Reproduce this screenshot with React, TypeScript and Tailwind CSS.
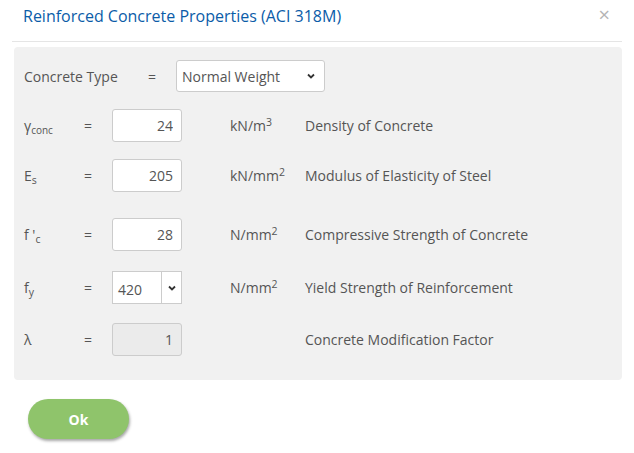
import { ReactNode } from "react";

const font = { fontFamily: '"Open Sans", "Liberation Sans", sans-serif' };

function Row({ label, control, unit, desc, className }: {
  label: ReactNode;
  control: ReactNode;
  unit?: ReactNode;
  desc: string;
  className?: string;
}) {
  return (
    <div className={"flex items-center " + (className ?? "")}>
      <div className="w-[60px] text-[14px] text-[#555]">{label}</div>
      <div className="w-[28px] text-[14px] text-[#555]">=</div>
      {control}
      <div className="w-[75px] ml-[48px] text-[14px] text-[#555]">{unit}</div>
      <div className="text-[14px] text-[#555]">{desc}</div>
    </div>
  );
}

function NumInput({ value, disabled }: { value: string; disabled?: boolean }) {
  return (
    <input
      readOnly
      value={value}
      disabled={disabled}
      className={
        "w-[70px] h-[33px] rounded-[3px] border border-[#ccc] text-right pr-[8px] text-[14px] text-[#555] outline-none " +
        (disabled ? "bg-[#ebebeb]" : "bg-white")
      }
      style={font}
    />
  );
}

function Chevron() {
  return (
    <svg width="10" height="10" viewBox="0 0 10 10">
      <path d="M2 3.5 L5 6.5 L8 3.5" fill="none" stroke="#333" strokeWidth="1.8" />
    </svg>
  );
}

export default function App() {
  return (
    <div className="w-[634px] h-[453px] bg-white" style={font}>
      {/* header */}
      <div className="flex items-center justify-between h-[42px] ml-[12px] mr-[12px] pl-[11px] pr-[12px] border-b border-[#e5e5e5]">
        <h1 className="text-[16px] font-[500] text-[#0b5ca8] -mt-[10px]">Reinforced Concrete Properties (ACI 318M)</h1>
        <span className="text-[20px] text-[#b5b5b5] leading-none -mt-[12px]">×</span>
      </div>

      {/* properties panel */}
      <div className="mt-[5px] ml-[14px] w-[608px] h-[333px] bg-[#f1f1f1] rounded-[4px] pl-[10px] pt-[13px]">
        <div className="flex items-center">
          <div className="w-[124px] text-[14px] text-[#555]">Concrete Type</div>
          <div className="w-[28px] text-[14px] text-[#555]">=</div>
          <div className="w-[149px] h-[32px] rounded-[3px] border border-[#ccc] bg-white flex items-center justify-between pl-[5px] pr-[8px] text-[14px] text-[#555]">
            <span>Normal Weight</span>
            <Chevron />
          </div>
        </div>

        <Row
          className="mt-[17px]"
          label={<span>γ<sub className="text-[10px]">conc</sub></span>}
          control={<NumInput value="24" />}
          unit={<span>kN/m<sup>3</sup></span>}
          desc="Density of Concrete"
        />
        <Row
          className="mt-[17px]"
          label={<span>E<sub>s</sub></span>}
          control={<NumInput value="205" />}
          unit={<span>kN/mm<sup>2</sup></span>}
          desc="Modulus of Elasticity of Steel"
        />
        <Row
          className="mt-[26px]"
          label={<span>f '<sub>c</sub></span>}
          control={<NumInput value="28" />}
          unit={<span>N/mm<sup>2</sup></span>}
          desc="Compressive Strength of Concrete"
        />
        <Row
          className="mt-[20px]"
          label={<span>f<sub>y</sub></span>}
          control={
            <div className="w-[70px] h-[33px] flex border border-[#ccc] bg-white text-[14px] text-[#555]">
              <div className="w-[49px] flex items-center pl-[5px] pt-[3px] border-r border-[#ccc]">420</div>
              <div className="flex-1 flex items-center justify-center"><Chevron /></div>
            </div>
          }
          unit={<span>N/mm<sup>2</sup></span>}
          desc="Yield Strength of Reinforcement"
        />
        <Row
          className="mt-[19px]"
          label="λ"
          control={<NumInput value="1" disabled />}
          desc="Concrete Modification Factor"
        />
      </div>

      <div className="mt-[19px] ml-[28px]">
        <button className="w-[101px] h-[40px] rounded-full bg-[#8fc46b] text-white font-bold text-[14px] shadow-[1px_2px_3px_rgba(0,0,0,0.35)]">
          Ok
        </button>
      </div>
    </div>
  );
}
